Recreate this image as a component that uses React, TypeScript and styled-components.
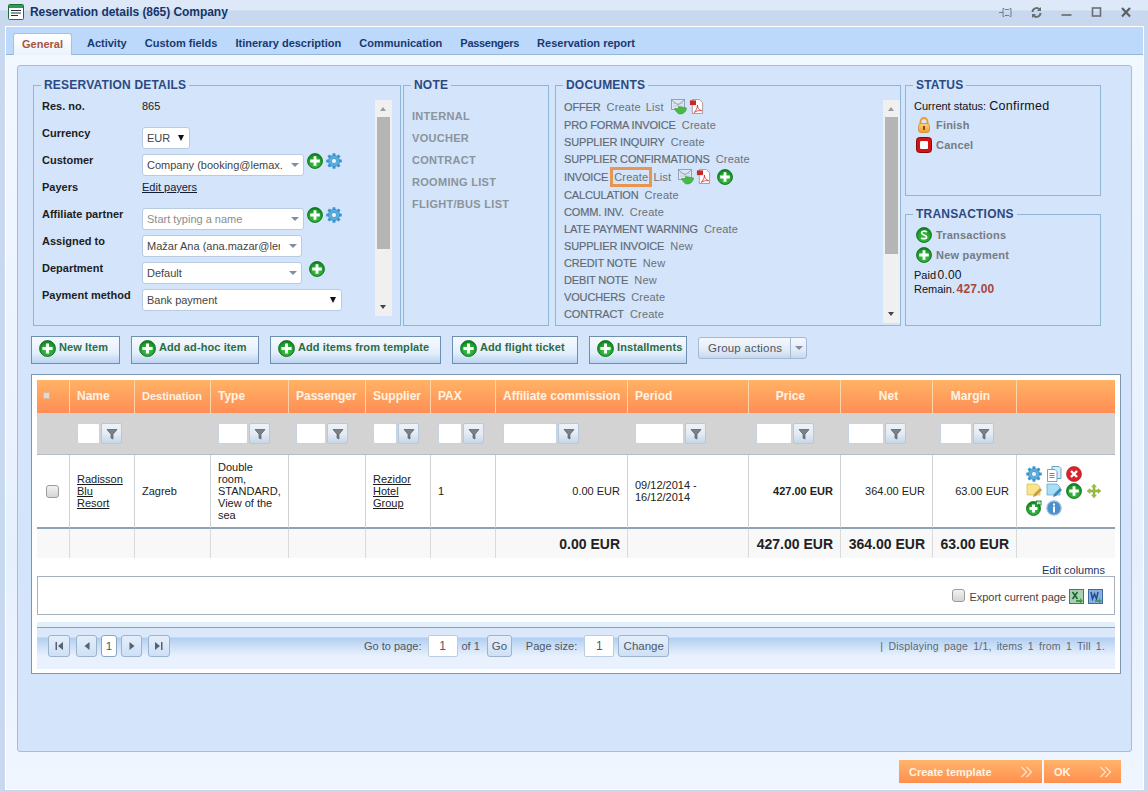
import React from "react";
import styled, { createGlobalStyle } from "styled-components";

const GlobalStyle = createGlobalStyle`
  html, body { margin: 0; padding: 0; height: 792px; overflow: hidden; }
  body { font-family: "Liberation Sans", Arial, sans-serif; font-size: 11px; color: #222; background: #d3e0f2; }
  * { box-sizing: border-box; }
`;

/* ---------- window chrome ---------- */
const Win = styled.div`
  height: 792px;
  display: flex;
  flex-direction: column;
  padding: 0 4px 2px 5px;
  background: linear-gradient(#dde8f8 0, #dde8f8 10px, #c8d9ef 11px, #c8d9ef 26px, #c8d9ef 100%);
`;
const TitleBar = styled.div`
  height: 26px;
  flex: none;
  display: flex;
  align-items: center;
  padding: 0 10px 2px 3px;
  color: #15346c;
`;
const TitleText = styled.div`
  font: bold 12px "Liberation Sans", Arial, sans-serif;
  letter-spacing: -0.05px;
  margin-left: 6px;
  flex: 1;
`;
const WinButtons = styled.div`
  display: flex;
  align-items: center;
  gap: 15px;
`;
const WinButton = styled.svg`
  width: 15px;
  height: 15px;
  display: block;
`;
const Content = styled.div`
  flex: 1;
  display: flex;
  flex-direction: column;
  min-height: 0;
  border: 1px solid #fff;
  background: linear-gradient(#f2f8ff, #e6f0fd 70%, #f0f6ff);
`;
const TabBar = styled.div`
  height: 28px;
  flex: none;
  display: flex;
  align-items: flex-end;
  padding-left: 7px;
  background: #bcd8fb;
  border-bottom: 1px solid #93b8d4;
`;
const Tab = styled.div<{ $active?: boolean; $tight?: boolean }>`
  height: ${(p) => (p.$active ? "22px" : "21px")};
  line-height: 21px;
  padding: 0 ${(p) => (p.$active ? "8px" : "9px")};
  margin-right: ${(p) => (p.$active ? "6px" : "0")};
  margin-bottom: ${(p) => (p.$active ? "-1px" : "0")};
  font-weight: bold;
  font-size: 11px;
  letter-spacing: ${(p) => (p.$tight ? "-0.3px" : "0")};
  color: ${(p) => (p.$active ? "#a8543f" : "#183a70")};
  background: ${(p) => (p.$active ? "linear-gradient(#fff, #ecf3fd)" : "none")};
  border: ${(p) => (p.$active ? "1px solid #a5c4da" : "0")};
  border-bottom: 0;
  border-radius: 3px 3px 0 0;
`;
const Body = styled.div`
  flex: 1;
  display: flex;
  flex-direction: column;
  padding: 10px 11px 0 11px;
`;
const Panel = styled.div`
  height: 687px;
  flex: none;
  padding: 12px 12px 0 13px;
  background: #d3e4fb;
  border: 1px solid #9cc2d6;
  border-radius: 3px;
`;
const Footer = styled.div`
  display: flex;
  justify-content: flex-end;
  gap: 2px;
  padding: 8px 11px 0 0;
`;
const OrangeButton = styled.div<{ $w: number }>`
  width: ${(p) => p.$w}px;
  height: 23px;
  padding: 0 8px 0 10px;
  display: flex;
  align-items: center;
  justify-content: space-between;
  font-weight: bold;
  font-size: 11px;
  color: #fff3e2;
  background: linear-gradient(#ffb46c, #ff8f4e);
`;

/* ---------- top fieldsets ---------- */
const TopRow = styled.div`
  display: flex;
  padding-left: 2px;
  height: 248px;
`;
const Fieldset = styled.fieldset<{ $w: number; $h?: number; $mr: number; $pr?: number }>`
  flex: none;
  margin: 0 ${(p) => p.$mr}px 0 0;
  width: ${(p) => p.$w}px;
  height: ${(p) => p.$h ?? 248}px;
  min-width: 0;
  padding: 7px ${(p) => p.$pr ?? 8}px 0 8px;
  border: 1px solid #8fb6d8;
`;
const Legend = styled.legend`
  margin-left: -1px;
  padding: 0 3px;
  height: 14px;
  line-height: 14px;
  font-size: 12px;
  font-weight: bold;
  letter-spacing: 0.2px;
  color: #2b4a82;
`;
const Scrolled = styled.div`
  display: flex;
  justify-content: space-between;
`;
const FormGrid = styled.div`
  width: 330px;
`;
const FormRow = styled.div`
  display: flex;
  height: 27px;
`;
const Label = styled.div`
  width: 100px;
  flex: none;
  line-height: 14px;
  font-weight: bold;
  color: #1d1d1d;
`;
const Value = styled.div`
  display: flex;
  align-items: flex-start;
  gap: 3px;
  line-height: 14px;
`;
const EditLink = styled.a`
  color: #101b3a;
  text-decoration: underline;
`;
const Combo = styled.div<{ $w: number; $muted?: boolean }>`
  width: ${(p) => p.$w}px;
  height: 22px;
  margin-top: 1px;
  padding: 0 4px;
  display: flex;
  align-items: center;
  justify-content: space-between;
  gap: 2px;
  background: #fff;
  border: 1px solid #b9cbe0;
  border-radius: 3px;
  color: ${(p) => (p.$muted ? "#8c8c8c" : "#444")};
  font-size: 11px;
`;
const ComboText = styled.span<{ $max?: number }>`
  ${(p) => (p.$max ? `width: ${p.$max}px;` : "flex: 1;")}
  white-space: nowrap;
  overflow: hidden;
`;
const Arrow = styled.span<{ $dark?: boolean }>`
  flex: none;
  width: 0;
  height: 0;
  margin-right: ${(p) => (p.$dark ? "1.5px" : "0")};
  border-left: ${(p) => (p.$dark ? "3.5px" : "4px")} solid transparent;
  border-right: ${(p) => (p.$dark ? "3.5px" : "4px")} solid transparent;
  border-top: ${(p) => (p.$dark ? "6px solid #111" : "4px solid #7d8fa5")};
`;
const IconGap = styled.span<{ $w: number }>`
  display: block;
  width: ${(p) => p.$w}px;
`;
const ScrollTrack = styled.div<{ $h: number }>`
  flex: none;
  position: relative;
  width: 17px;
  height: ${(p) => p.$h}px;
  margin-top: 1px;
  background: #f0f0f0;
`;
const ScrollThumb = styled.div<{ $h: number }>`
  position: absolute;
  left: 2px;
  top: 17px;
  width: 13px;
  height: ${(p) => p.$h}px;
  background: #b5b5b5;
`;
const ScrollUp = styled.span`
  position: absolute;
  left: 5px;
  top: 7px;
  border-left: 3.5px solid transparent;
  border-right: 3.5px solid transparent;
  border-bottom: 4px solid #9c9c9c;
`;
const ScrollDown = styled.span`
  position: absolute;
  left: 5px;
  bottom: 7px;
  border-left: 3.5px solid transparent;
  border-right: 3.5px solid transparent;
  border-top: 4px solid #444;
`;
const NoteList = styled.div`
  padding-top: 6px;
`;
const NoteItem = styled.div`
  height: 22px;
  line-height: 22px;
  font-weight: bold;
  font-size: 11px;
  letter-spacing: 0.3px;
  color: #8b939b;
`;
const DocList = styled.div`
  margin-top: -2px;
`;
const DocRow = styled.div<{ $tall?: boolean }>`
  height: ${(p) => (p.$tall ? 19 : 17)}px;
  display: flex;
  align-items: center;
  white-space: nowrap;
`;
const DocName = styled.span`
  font-size: 11px;
  letter-spacing: -0.15px;
  color: #5f6971;
  -webkit-text-stroke: 0.15px #5f6971;
  margin-right: 6px;
`;
const DocAction = styled.span<{ $boxed?: boolean }>`
  font-size: 11px;
  letter-spacing: 0.2px;
  color: #6b7278;
  margin-right: 5px;
  ${(p) =>
    p.$boxed
      ? `position: relative;
         &::after { content: ""; position: absolute; left: -4px; right: -4px; top: -4px; bottom: -4px; border: 3px solid #e8964f; }`
      : ""}
`;
const DocIcons = styled.span`
  display: flex;
  align-items: center;
  gap: 1px;
  margin-left: 2px;
`;
const RightColumn = styled.div`
  width: 196px;
  flex: none;
  display: flex;
  flex-direction: column;
  gap: 11px;
`;
const StatusLine = styled.div`
  height: 14px;
  line-height: 14px;
  color: #111;
  font-size: 11px;
  margin-bottom: 2px;
`;
const PaidLine = styled(StatusLine)`
  margin-bottom: 0;
`;
const StatusStrong = styled.span`
  font-size: 12.5px;
  letter-spacing: 0.3px;
`;
const Money = styled.span<{ $red?: boolean }>`
  margin-left: -1.5px;
  font-size: 12px;
  letter-spacing: 0.2px;
  color: ${(p) => (p.$red ? "#a8473a" : "#111")};
  font-weight: ${(p) => (p.$red ? "bold" : "normal")};
`;
const ActionRow = styled.div`
  height: 20px;
  display: flex;
  align-items: center;
  padding-left: 2px;
  gap: 4px;
  font-weight: bold;
  font-size: 11px;
  letter-spacing: 0.2px;
  color: #757b82;
`;
const TransactionList = styled.div`
  margin: -3px 0 3px;
`;

/* ---------- toolbar ---------- */
const Toolbar = styled.div`
  display: flex;
  align-items: flex-start;
  gap: 11px;
  margin: 10px 0;
  height: 28px;
`;
const AddButton = styled.div<{ $w: number }>`
  width: ${(p) => p.$w}px;
  height: 28px;
  padding: 3px 0 0 7px;
  display: flex;
  align-items: flex-start;
  gap: 3px;
  border: 1px solid #6f8fb2;
  background: linear-gradient(#f6faff, #e4effc 60%, #bcd4f0);
  font-weight: bold;
  font-size: 11px;
  line-height: 15px;
  letter-spacing: 0.1px;
  color: #2d6b45;
`;
const GroupButton = styled.div`
  height: 22px;
  margin-top: 1px;
  display: flex;
  border: 1px solid #a5b9d1;
  border-radius: 3px;
  background: linear-gradient(#f4f8fd, #e2ebf7 60%, #c6d8ee);
  color: #4a5560;
  font-size: 11.5px;
  letter-spacing: 0.2px;
`;
const GroupText = styled.div`
  padding: 0 8px 0 9px;
  line-height: 21px;
  border-right: 1px solid #a5b9d1;
`;
const GroupCaret = styled.div`
  width: 15px;
  display: flex;
  align-items: center;
  justify-content: center;
`;

/* ---------- grid ---------- */
const GridBox = styled.div`
  width: 1090px;
  height: 300px;
  padding: 5px;
  background: #fff;
  border: 1px solid #7f96ae;
`;
const Table = styled.table`
  width: 1078px;
  table-layout: fixed;
  border-collapse: separate;
  border-spacing: 0;
`;
const Th = styled.th<{ $align?: string; $small?: boolean; $pad?: string }>`
  height: 33px;
  padding: ${(p) => p.$pad ?? "0 7px"};
  padding-bottom: 2px;
  text-align: ${(p) => p.$align ?? "left"};
  white-space: nowrap;
  font-size: ${(p) => (p.$small ? "11px" : "12px")};
  font-weight: bold;
  color: #fff3e4;
  background: linear-gradient(#ffb365, #ff8d55);
  border-right: 1px solid #ffd3a8;
  &:last-child { border-right: 0; }
`;
const FilterCell = styled.td`
  height: 42px;
  padding: 0 0 0 7px;
  background: #d3d3d3;
  border-bottom: 1px solid #b4bec8;
`;
const FilterWrap = styled.div`
  display: flex;
  gap: 1px;
`;
const FilterInput = styled.div<{ $w: number }>`
  width: ${(p) => p.$w}px;
  height: 21px;
  background: #fff;
  border: 1px solid #c5d3e2;
  border-radius: 2px;
`;
const FilterButton = styled.div`
  width: 21px;
  height: 21px;
  display: flex;
  align-items: center;
  justify-content: center;
  background: linear-gradient(#eef3fa, #e4ebf5 50%, #c7d6e8);
  border: 1px solid #b8c8da;
  border-radius: 2px;
`;
const Td = styled.td<{ $align?: string; $bold?: boolean }>`
  height: 74px;
  padding: 0 7px;
  text-align: ${(p) => p.$align ?? "left"};
  font-weight: ${(p) => (p.$bold ? "bold" : "normal")};
  font-size: 11px;
  line-height: 12px;
  color: #222;
  vertical-align: middle;
  border-right: 1px solid #cfd3d6;
  border-bottom: 2px solid #8ea2b4;
  &:last-child { border-right: 0; }
`;
const TotalCell = styled.td`
  height: 29px;
  padding: 0 7px;
  text-align: right;
  font-weight: bold;
  font-size: 14px;
  color: #222;
  background: #f8f8f8;
  border-right: 1px solid #d8dadc;
  &:last-child { border-right: 0; }
`;
const CellLink = styled.a`
  color: #1b1b1b;
  text-decoration: underline;
`;
const Check = styled.span<{ $m?: string }>`
  display: block;
  width: 13px;
  height: 13px;
  margin: ${(p) => p.$m ?? "0"};
  background: linear-gradient(#f2f2f2, #d5d5d5);
  border: 1px solid #9b9b9b;
  border-radius: 3px;
`;
const HeadCheck = styled.span`
  display: block;
  width: 7px;
  height: 7px;
  margin-left: -1px;
  background: #e3d9d2;
  border: 1px solid #d8b9a0;
`;
const RowIcons = styled.div`
  display: flex;
  flex-wrap: wrap;
  gap: 1px 4px;
  width: 82px;
  margin-left: 2px;
`;
const EditColumns = styled.div`
  height: 18px;
  padding: 6px 10px 0 0;
  text-align: right;
  font-size: 11px;
  line-height: 13px;
  color: #1e3563;
`;
const ExportBox = styled.div`
  height: 39px;
  padding: 12px 11px 0 0;
  display: flex;
  justify-content: flex-end;
  align-items: flex-start;
  gap: 4px;
  border: 1px solid #a5b1bd;
  font-size: 11px;
  color: #444;
`;
const ExportLabel = styled.span`
  margin-top: 2px;
  margin-right: -1px;
`;
const Pager = styled.div`
  height: 47px;
  margin-top: 7px;
  padding: 12px 10px 0 11px;
  display: flex;
  align-items: flex-start;
  background: linear-gradient(#e3eefb 0, #e3eefb 5px, #7fa6c4 5px, #7fa6c4 6px, #dbe8fa 6px, #dbe8fa 15px, #b2cef2 16px, #d4e4f9 27px, #e8f1fd 34px);
`;
const PagerGroup = styled.div`
  display: flex;
  align-items: center;
  height: 22px;
  margin-top: 1px;
`;
const PagerButton = styled.div<{ $w?: number; $mr?: number; $active?: boolean }>`
  width: ${(p) => (p.$w ? `${p.$w}px` : "auto")};
  height: 22px;
  margin-right: ${(p) => p.$mr ?? 0}px;
  padding: 0 ${(p) => (p.$w ? 0 : 5)}px;
  display: flex;
  align-items: center;
  justify-content: center;
  border: 1px solid ${(p) => (p.$active ? "#8ba4bf" : "#9cb3cc")};
  border-radius: 3px;
  background: ${(p) => (p.$active ? "#fff" : "linear-gradient(#e4eefb, #cfe0f6)")};
  color: #4c5a68;
  font-size: 11.5px;
`;
const PagerText = styled.span<{ $mr?: number }>`
  margin-right: ${(p) => p.$mr ?? 0}px;
  color: #4b5762;
  font-size: 11px;
  white-space: nowrap;
`;
const PagerInput = styled.div`
  width: 30px;
  height: 22px;
  margin-right: 4px;
  text-align: center;
  line-height: 21px;
  background: #fff;
  border: 1px solid #bccde0;
  border-radius: 2px;
  color: #4c5a68;
  font-size: 12px;
`;
const PagerSpacer = styled.div<{ $w?: number }>`
  flex: ${(p) => (p.$w ? "none" : 1)};
  width: ${(p) => (p.$w ? `${p.$w}px` : "auto")};
`;
const PagerInfo = styled.span`
  margin-top: 6px;
  color: #5b6874;
  font-size: 10.5px;
  letter-spacing: 0.2px;
  word-spacing: 2px;
  white-space: nowrap;
`;
const Hidden = styled.svg`
  position: absolute;
  width: 0;
  height: 0;
`;
const Ico = styled.svg<{ $s?: number; $mt?: number }>`
  flex: none;
  display: block;
  width: ${(p) => p.$s ?? 16}px;
  height: ${(p) => p.$s ?? 16}px;
  margin-top: ${(p) => p.$mt ?? 0}px;
`;

/* ---------- icons ---------- */
const Plus = ({ s, mt }: { s?: number; mt?: number }) => (
  <Ico viewBox="0 0 16 16" $s={s} $mt={mt}>
    <circle cx="8" cy="8" r="7.5" fill="url(#greenBall)" stroke="#0d6b1d" strokeWidth="0.8" />
    <path d="M6.600 3.200h2.800v3.400h3.400v2.800H9.400v3.400H6.600V9.400H3.200V6.600h3.400z" fill="#fff" />
  </Ico>
);
const Gear = ({ s, mt }: { s?: number; mt?: number }) => (
  <Ico viewBox="0 0 16 16" $s={s} $mt={mt}>
    <g fill="#3f96cf">
      {[0, 45, 90, 135, 180, 225, 270, 315].map((a) => (
        <rect key={a} x="6.500" y="0.200" width="3" height="4" rx="0.600" transform={`rotate(${a} 8 8)`} />
      ))}
    </g>
    <circle cx="8" cy="8" r="5.600" fill="#58aee0" stroke="#2e7cb4" strokeWidth="0.500" />
    <circle cx="8" cy="8" r="2.600" fill="#e4f3fc" stroke="#2e7cb4" strokeWidth="0.600" />
  </Ico>
);
const MailGo = () => (
  <Ico viewBox="0 0 17 17" $s={17}>
    <rect x="0.500" y="1.500" width="13" height="10" fill="#dfe7f2" stroke="#7d92ad" strokeWidth="0.800" />
    <path d="M.5 2l6.500 5 6.500-5" fill="none" stroke="#7d92ad" strokeWidth="0.800" />
    <path d="M2 5.500h10M2 8h10" stroke="#a9b9cd" strokeWidth="0.600" />
    <path d="M3.500 10.500h4V8.500l8 1.500c0 3.500-3.500 6.500-7 6-2-.3-4-3-5-5.500z" fill="#46bb3f" stroke="#2c8a2c" strokeWidth="0.500" />
  </Ico>
);
const Pdf = () => (
  <Ico viewBox="0 0 15 16" $s={15}>
    <path d="M3 .5h7.500l3.500 3.500v11.500H3z" fill="#fff" stroke="#9a8080" strokeWidth="0.800" />
    <rect x="0.500" y="1.500" width="6.500" height="5" fill="#c8282a" />
    <path d="M5 14.500c2-2 3.500-5 3.500-8 0 3 1.500 5 4.500 6-3-.5-6 .2-8 2z" fill="none" stroke="#c8282a" strokeWidth="0.800" />
  </Ico>
);
const Lock = () => (
  <Ico viewBox="0 0 16 16">
    <path d="M4.500 7V4.500a3.500 3.500 0 0 1 7 0V7" fill="none" stroke="#e89a2c" strokeWidth="1.800" />
    <rect x="2.500" y="6.500" width="11" height="9" rx="2.500" fill="url(#orangeBall)" stroke="#c87a1a" strokeWidth="0.600" />
    <rect x="7" y="9" width="2" height="4" fill="#8a4a10" />
  </Ico>
);
const Stop = () => (
  <Ico viewBox="0 0 16 16">
    <rect x="0.500" y="0.500" width="15" height="15" rx="3" fill="#d01414" stroke="#8d0a0a" />
    <rect x="4" y="4" width="8" height="8" rx="1" fill="#fff" />
  </Ico>
);
const Dollar = () => (
  <Ico viewBox="0 0 16 16">
    <circle cx="8" cy="8" r="7.500" fill="url(#greenBall)" stroke="#0d6b1d" strokeWidth="0.800" />
    <path d="M10.800 5.200C9.600 3.800 5.600 3.800 5.600 6c0 2.400 5 1.600 5 4 0 2.200-4 2.200-5.400.8" fill="none" stroke="#fff" strokeWidth="1.700" />
  </Ico>
);
const Close = () => (
  <Ico viewBox="0 0 16 16">
    <circle cx="8" cy="8" r="7.500" fill="#d9232a" stroke="#a5141a" strokeWidth="0.600" />
    <path d="M5 5l6 6M11 5l-6 6" stroke="#fff" strokeWidth="2.400" />
  </Ico>
);
const DocCopy = () => (
  <Ico viewBox="0 0 16 16">
    <path d="M6 .5h7l2 2v10H6z" fill="#d7ecf8" stroke="#4b90b8" strokeWidth="0.800" />
    <path d="M1.500 3.500H9l2 2v10H1.500z" fill="#fff" stroke="#4b90b8" strokeWidth="0.800" />
    <path d="M3.500 7.500h5M3.500 9.500h5M3.500 11.500h5" stroke="#3f6e8c" strokeWidth="0.800" />
  </Ico>
);
const NoteEdit = ({ blue }: { blue?: boolean }) => (
  <Ico viewBox="0 0 16 16">
    <path d="M1 1h10l3 3v8H1z" fill={blue ? "#a9def5" : "#fbe58a"} stroke={blue ? "#4ea3cc" : "#d6b84e"} strokeWidth="0.700" />
    <path d="M7 14l1-3 6-6 2 2-6 6z" fill={blue ? "#3e86b8" : "#c99a4c"} />
  </Ico>
);
const Move = () => (
  <Ico viewBox="0 0 16 16">
    <path d="M8 1l2.400 3H9v3h3V5.600L15 8l-3 2.400V9H9v3h1.400L8 15l-2.400-3H7V9H4v1.400L1 8l3-2.400V7h3V4H5.600z" fill="#9bbf3e" stroke="#7b9c2a" strokeWidth="0.400" />
  </Ico>
);
const PlusA = () => (
  <Ico viewBox="0 0 16 16">
    <circle cx="7.500" cy="8.500" r="7" fill="url(#greenBall)" stroke="#0d6b1d" strokeWidth="0.800" />
    <path d="M6 4.500h3v2.500h2.500v3H9v2.500H6v-2.500H3.500v-3H6z" fill="#fff" />
    <path d="M10 0.500h5.500v5h-5.500z" fill="#1f8a33" />
    <path d="M11.400 4.500V2h2.700v2.500M11.400 3.300h2.700" stroke="#fff" strokeWidth="0.800" fill="none" />
  </Ico>
);
const Info = () => (
  <Ico viewBox="0 0 16 16">
    <circle cx="8" cy="8" r="7.200" fill="#4c8fce" stroke="#a8c4de" strokeWidth="1.200" />
    <rect x="7" y="3.500" width="2" height="2" fill="#fff" />
    <rect x="7" y="6.500" width="2" height="6" fill="#fff" />
  </Ico>
);
const Excel = ({ word }: { word?: boolean }) => (
  <Ico viewBox="0 0 15 15" $s={15}>
    <rect x="0.500" y="0.500" width="14" height="14" fill={word ? "#8cb0dc" : "#a8cfb0"} stroke={word ? "#3f68a6" : "#3f7f56"} />
    <path d={word ? "M3 3l1.500 7 2-5 2 5 1.500-7" : "M3.500 3l5 7M8.500 3l-5 7"} stroke={word ? "#1f4c94" : "#16622f"} strokeWidth="1.500" fill="none" />
    <path d="M7 11h4V9l3 3-3 2.500V13H7z" fill={word ? "#3f9f54" : "#3c9a4c"} />
  </Ico>
);
const Funnel = () => (
  <Ico viewBox="0 0 12 12" $s={12}>
    <path d="M1 1.500h10L7 6.200V11L5 10V6.200z" fill="#7c8186" stroke="#55595e" strokeWidth="0.700" />
  </Ico>
);
const Chevrons = () => (
  <Ico viewBox="0 0 14 14" $s={14}>
    <path d="M1.500 2l5 5-5 5M6.500 2l5 5-5 5" fill="none" stroke="#ffe3c4" strokeWidth="1.300" />
  </Ico>
);
const PagerGlyph = ({ d }: { d: string }) => (
  <Ico viewBox="0 0 10 10" $s={10}>
    <path d={d} fill="#55626f" />
  </Ico>
);

/* ---------- data ---------- */
const colWidths = [33, 65, 76, 78, 77, 65, 65, 132, 121, 92, 92, 84, 98];

const docs: { name: string; action: string; list?: boolean; boxed?: boolean; plus?: boolean }[] = [
  { name: "OFFER", action: "Create", list: true },
  { name: "PRO FORMA INVOICE", action: "Create" },
  { name: "SUPPLIER INQUIRY", action: "Create" },
  { name: "SUPPLIER CONFIRMATIONS", action: "Create" },
  { name: "INVOICE", action: "Create", list: true, boxed: true, plus: true },
  { name: "CALCULATION", action: "Create" },
  { name: "COMM. INV.", action: "Create" },
  { name: "LATE PAYMENT WARNING", action: "Create" },
  { name: "SUPPLIER INVOICE", action: "New" },
  { name: "CREDIT NOTE", action: "New" },
  { name: "DEBIT NOTE", action: "New" },
  { name: "VOUCHERS", action: "Create" },
  { name: "CONTRACT", action: "Create" },
];

const filters: (number | null)[] = [null, 23, null, 30, 30, 24, 24, 54, 49, 36, 36, 32, null];

export default function App() {
  return (
    <>
      <GlobalStyle />
      <Hidden>
        <defs>
          <radialGradient id="greenBall" cx="50%" cy="65%" r="65%">
            <stop offset="0" stopColor="#43c848" />
            <stop offset="0.65" stopColor="#1fa02c" />
            <stop offset="1" stopColor="#0b7a1c" />
          </radialGradient>
          <linearGradient id="orangeBall" x1="0" y1="0" x2="0" y2="1">
            <stop offset="0" stopColor="#ffd27a" />
            <stop offset="1" stopColor="#f09a2a" />
          </linearGradient>
        </defs>
      </Hidden>
      <Win>
        <TitleBar>
          <Ico viewBox="0 0 16 16">
            <rect x="0.500" y="0.500" width="15" height="15" rx="1" fill="#fff" stroke="#1d6e3a" />
            <rect x="1" y="1" width="14" height="3" fill="#2f9a52" />
            <path d="M3 6.500h10M3 9h10M3 11.500h7" stroke="#23303a" strokeWidth="1" />
          </Ico>
          <TitleText>Reservation details (865) Company</TitleText>
          <WinButtons>
            <WinButton viewBox="0 0 15 15">
              <path d="M-3 7.500h7M4 3.500h1l1 1h4l1-1h1v8h-1l-1-1H6l-1 1H4z" fill="none" stroke="#777c82" />
            </WinButton>
            <WinButton viewBox="0 0 15 15">
              <path d="M3.500 7a4 4 0 0 1 7-2.500M11.500 8a4 4 0 0 1-7 2.500" fill="none" stroke="#696e73" strokeWidth="2" />
              <path d="M12 2v4H8zM3 13V9h4z" fill="#696e73" />
            </WinButton>
            <WinButton viewBox="0 0 15 15">
              <rect x="2.500" y="9" width="10" height="2" fill="#7a7f85" />
            </WinButton>
            <WinButton viewBox="0 0 15 15">
              <rect x="3.500" y="3" width="8" height="8" fill="none" stroke="#696e73" strokeWidth="1.600" />
            </WinButton>
            <WinButton viewBox="0 0 15 15">
              <path d="M3 3l8 8.500M11 3l-8 8.500" stroke="#5a5f64" strokeWidth="2.200" />
            </WinButton>
          </WinButtons>
        </TitleBar>
        <Content>
          <TabBar>
            <Tab $active>General</Tab>
            <Tab>Activity</Tab>
            <Tab>Custom fields</Tab>
            <Tab>Itinerary description</Tab>
            <Tab>Communication</Tab>
            <Tab $tight>Passengers</Tab>
            <Tab>Reservation report</Tab>
          </TabBar>
          <Body>
            <Panel>
              <TopRow>
                <Fieldset $w={368} $mr={2}>
                  <Legend>RESERVATION DETAILS</Legend>
                  <Scrolled>
                    <FormGrid>
                      <FormRow>
                        <Label>Res. no.</Label>
                        <Value>865</Value>
                      </FormRow>
                      <FormRow>
                        <Label>Currency</Label>
                        <Value>
                          <Combo $w={48}>
                            <ComboText>EUR</ComboText>
                            <Arrow $dark />
                          </Combo>
                        </Value>
                      </FormRow>
                      <FormRow>
                        <Label>Customer</Label>
                        <Value>
                          <Combo $w={162}>
                            <ComboText>Company (booking@lemax.</ComboText>
                            <Arrow />
                          </Combo>
                          <Plus />
                          <Gear />
                        </Value>
                      </FormRow>
                      <FormRow>
                        <Label>Payers</Label>
                        <Value>
                          <EditLink>Edit payers</EditLink>
                        </Value>
                      </FormRow>
                      <FormRow>
                        <Label>Affiliate partner</Label>
                        <Value>
                          <Combo $w={162} $muted>
                            <ComboText>Start typing a name</ComboText>
                            <Arrow />
                          </Combo>
                          <Plus />
                          <Gear />
                        </Value>
                      </FormRow>
                      <FormRow>
                        <Label>Assigned to</Label>
                        <Value>
                          <Combo $w={160}>
                            <ComboText $max={133}>Mažar Ana (ana.mazar@lemax.net)</ComboText>
                            <Arrow />
                          </Combo>
                        </Value>
                      </FormRow>
                      <FormRow>
                        <Label>Department</Label>
                        <Value>
                          <Combo $w={160}>
                            <ComboText>Default</ComboText>
                            <Arrow />
                          </Combo>
                          <IconGap $w={1} />
                          <Plus />
                        </Value>
                      </FormRow>
                      <FormRow>
                        <Label>Payment method</Label>
                        <Value>
                          <Combo $w={200}>
                            <ComboText>Bank payment</ComboText>
                            <Arrow $dark />
                          </Combo>
                        </Value>
                      </FormRow>
                    </FormGrid>
                    <ScrollTrack $h={216}>
                      <ScrollUp />
                      <ScrollThumb $h={132} />
                      <ScrollDown />
                    </ScrollTrack>
                  </Scrolled>
                </Fieldset>
                <Fieldset $w={146} $mr={6}>
                  <Legend>NOTE</Legend>
                  <NoteList>
                    <NoteItem>INTERNAL</NoteItem>
                    <NoteItem>VOUCHER</NoteItem>
                    <NoteItem>CONTRACT</NoteItem>
                    <NoteItem>ROOMING LIST</NoteItem>
                    <NoteItem>FLIGHT/BUS LIST</NoteItem>
                  </NoteList>
                </Fieldset>
                <Fieldset $w={346} $mr={4} $pr={0}>
                  <Legend>DOCUMENTS</Legend>
                  <Scrolled>
                    <DocList>
                      {docs.map((d) => (
                        <DocRow key={d.name} $tall={d.list}>
                          <DocName>{d.name}</DocName>
                          <DocAction $boxed={d.boxed}>{d.action}</DocAction>
                          {d.list && <DocAction>List</DocAction>}
                          {d.list && (
                            <DocIcons>
                              <MailGo />
                              <Pdf />
                              {d.plus && <IconGap $w={4} />}
                              {d.plus && <Plus />}
                            </DocIcons>
                          )}
                        </DocRow>
                      ))}
                    </DocList>
                    <ScrollTrack $h={223}>
                      <ScrollUp />
                      <ScrollThumb $h={137} />
                      <ScrollDown />
                    </ScrollTrack>
                  </Scrolled>
                </Fieldset>
                <RightColumn>
                  <Fieldset $w={196} $h={118} $mr={0}>
                    <Legend>STATUS</Legend>
                    <StatusLine>
                      Current status: <StatusStrong>Confirmed</StatusStrong>
                    </StatusLine>
                    <ActionRow>
                      <Lock />
                      Finish
                    </ActionRow>
                    <ActionRow>
                      <Stop />
                      Cancel
                    </ActionRow>
                  </Fieldset>
                  <Fieldset $w={196} $h={119} $mr={0}>
                    <Legend>TRANSACTIONS</Legend>
                    <TransactionList>
                      <ActionRow>
                        <Dollar />
                        Transactions
                      </ActionRow>
                      <ActionRow>
                        <Plus />
                        New payment
                      </ActionRow>
                    </TransactionList>
                    <PaidLine>
                      Paid <Money>0.00</Money>
                    </PaidLine>
                    <PaidLine>
                      Remain. <Money $red>427.00</Money>
                    </PaidLine>
                  </Fieldset>
                </RightColumn>
              </TopRow>
              <Toolbar>
                <AddButton $w={89}>
                  <Plus s={17} />
                  New Item
                </AddButton>
                <AddButton $w={128}>
                  <Plus s={17} />
                  Add ad-hoc item
                </AddButton>
                <AddButton $w={171}>
                  <Plus s={17} />
                  Add items from template
                </AddButton>
                <AddButton $w={126}>
                  <Plus s={17} />
                  Add flight ticket
                </AddButton>
                <AddButton $w={98}>
                  <Plus s={17} />
                  Installments
                </AddButton>
                <GroupButton>
                  <GroupText>Group actions</GroupText>
                  <GroupCaret>
                    <Arrow />
                  </GroupCaret>
                </GroupButton>
              </Toolbar>
              <GridBox>
                <Table>
                  <colgroup>
                    {colWidths.map((w, i) => (
                      <col key={i} width={w} />
                    ))}
                  </colgroup>
                  <thead>
                    <tr>
                      <Th>
                        <HeadCheck />
                      </Th>
                      <Th>Name</Th>
                      <Th $small>Destination</Th>
                      <Th>Type</Th>
                      <Th>Passenger</Th>
                      <Th>Supplier</Th>
                      <Th>PAX</Th>
                      <Th>Affiliate commission</Th>
                      <Th>Period</Th>
                      <Th $align="center" $pad="0 15px 0 7px">Price</Th>
                      <Th $align="center" $pad="0 7px 0 11px">Net</Th>
                      <Th $align="center" $pad="0 15px 0 7px">Margin</Th>
                      <Th />
                    </tr>
                    <tr>
                      {filters.map((w, i) => (
                        <FilterCell key={i}>
                          {w !== null && (
                            <FilterWrap>
                              <FilterInput $w={w} />
                              <FilterButton>
                                <Funnel />
                              </FilterButton>
                            </FilterWrap>
                          )}
                        </FilterCell>
                      ))}
                    </tr>
                  </thead>
                  <tbody>
                    <tr>
                      <Td>
                        <Check $m="0 0 0 2px" />
                      </Td>
                      <Td>
                        <CellLink>Radisson Blu Resort</CellLink>
                      </Td>
                      <Td>Zagreb</Td>
                      <Td>Double room, STANDARD, View of the sea</Td>
                      <Td />
                      <Td>
                        <CellLink>Rezidor Hotel Group</CellLink>
                      </Td>
                      <Td>1</Td>
                      <Td $align="right">0.00 EUR</Td>
                      <Td>09/12/2014 - 16/12/2014</Td>
                      <Td $align="right" $bold>
                        427.00 EUR
                      </Td>
                      <Td $align="right">364.00 EUR</Td>
                      <Td $align="right">63.00 EUR</Td>
                      <Td>
                        <RowIcons>
                          <Gear />
                          <DocCopy />
                          <Close />
                          <IconGap $w={16} />
                          <NoteEdit />
                          <NoteEdit blue />
                          <Plus />
                          <Move />
                          <PlusA />
                          <Info />
                        </RowIcons>
                      </Td>
                    </tr>
                    <tr>
                      <TotalCell />
                      <TotalCell />
                      <TotalCell />
                      <TotalCell />
                      <TotalCell />
                      <TotalCell />
                      <TotalCell />
                      <TotalCell>0.00 EUR</TotalCell>
                      <TotalCell />
                      <TotalCell>427.00 EUR</TotalCell>
                      <TotalCell>364.00 EUR</TotalCell>
                      <TotalCell>63.00 EUR</TotalCell>
                      <TotalCell />
                    </tr>
                  </tbody>
                </Table>
                <EditColumns>Edit columns</EditColumns>
                <ExportBox>
                  <Check />
                  <ExportLabel>Export current page</ExportLabel>
                  <Excel />
                  <Excel word />
                </ExportBox>
                <Pager>
                  <PagerGroup>
                    <PagerButton $w={22} $mr={6}>
                      <PagerGlyph d="M1.500 1h1.500v8H1.500zM9 1v8L4 5z" />
                    </PagerButton>
                    <PagerButton $w={21} $mr={4}>
                      <PagerGlyph d="M7.500 1v8L2.500 5z" />
                    </PagerButton>
                    <PagerButton $w={16} $mr={4} $active>
                      1
                    </PagerButton>
                    <PagerButton $w={21} $mr={6}>
                      <PagerGlyph d="M2.500 1v8l5-4z" />
                    </PagerButton>
                    <PagerButton $w={22}>
                      <PagerGlyph d="M1 1v8l5-4zM7 1h1.500v8H7z" />
                    </PagerButton>
                    <PagerSpacer $w={194} />
                    <PagerText $mr={6}>Go to page:</PagerText>
                    <PagerInput>1</PagerInput>
                    <PagerText $mr={7}>of 1</PagerText>
                    <PagerButton $w={25} $mr={14}>
                      Go
                    </PagerButton>
                    <PagerText $mr={7}>Page size:</PagerText>
                    <PagerInput>1</PagerInput>
                    <PagerButton $w={51}>Change</PagerButton>
                  </PagerGroup>
                  <PagerSpacer />
                  <PagerInfo>| Displaying page 1/1, items 1 from 1 Till 1.</PagerInfo>
                </Pager>
              </GridBox>
            </Panel>
            <Footer>
              <OrangeButton $w={143}>
                Create template
                <Chevrons />
              </OrangeButton>
              <OrangeButton $w={77}>
                OK
                <Chevrons />
              </OrangeButton>
            </Footer>
          </Body>
        </Content>
      </Win>
    </>
  );
}
